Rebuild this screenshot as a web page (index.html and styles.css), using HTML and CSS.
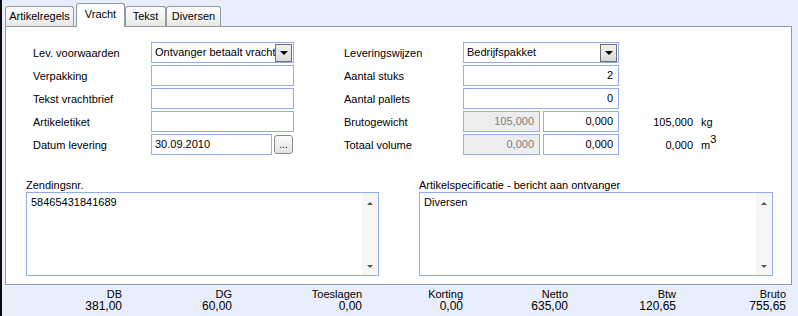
FILE: index.html
```html
<!DOCTYPE html>
<html>
<head>
<meta charset="utf-8">
<link rel="stylesheet" href="styles.css">
</head>
<body>
<div class="window">
  <div class="tabs">
    <div class="tab t1">Artikelregels</div>
    <div class="tab active">Vracht</div>
    <div class="tab t3">Tekst</div>
    <div class="tab t4">Diversen</div>
  </div>
  <div class="panel">
    <div class="form">
      <div class="col col-left">
        <div class="row"><span class="lbl">Lev. voorwaarden</span><div class="input combo w-left"><span class="val">Ontvanger betaalt vracht</span><span class="ddbtn"><i class="tri"></i></span></div></div>
        <div class="row"><span class="lbl">Verpakking</span><div class="input w-left"></div></div>
        <div class="row"><span class="lbl">Tekst vrachtbrief</span><div class="input w-left"></div></div>
        <div class="row"><span class="lbl">Artikeletiket</span><div class="input w-left"></div></div>
        <div class="row"><span class="lbl">Datum levering</span><div class="input w-date"><span class="val">30.09.2010</span></div><span class="dots">...</span></div>
      </div>
      <div class="col col-right">
        <div class="row"><span class="lbl lbl-r">Leveringswijzen</span><div class="input combo w-right"><span class="val">Bedrijfspakket</span><span class="ddbtn"><i class="tri"></i></span></div></div>
        <div class="row"><span class="lbl lbl-r">Aantal stuks</span><div class="input w-right num">2</div></div>
        <div class="row"><span class="lbl lbl-r">Aantal pallets</span><div class="input w-right num">0</div></div>
        <div class="row"><span class="lbl lbl-r">Brutogewicht</span><div class="input disabled w-dis num">105,000</div><div class="input w-sec num">0,000</div><span class="unitnum">105,000</span><span class="unit">kg</span></div>
        <div class="row"><span class="lbl lbl-r">Totaal volume</span><div class="input disabled w-dis num">0,000</div><div class="input w-sec num">0,000</div><span class="unitnum">0,000</span><span class="unit">m<sup>3</sup></span></div>
      </div>
    </div>
    <div class="memos">
      <div class="memo m1">
        <div class="mlabel">Zendingsnr.</div>
        <div class="mbox"><div class="mtext">58465431841689</div><div class="sb"><i class="up"></i><i class="down"></i></div></div>
      </div>
      <div class="memo m2">
        <div class="mlabel">Artikelspecificatie - bericht aan ontvanger</div>
        <div class="mbox"><div class="mtext">Diversen</div><div class="sb"><i class="up"></i><i class="down"></i></div></div>
      </div>
    </div>
  </div>
  <div class="totals">
    <div class="tot c1"><span class="tl">DB</span><span class="tv">381,00</span></div>
    <div class="tot c2"><span class="tl">DG</span><span class="tv">60,00</span></div>
    <div class="tot c3"><span class="tl">Toeslagen</span><span class="tv">0,00</span></div>
    <div class="tot c4"><span class="tl">Korting</span><span class="tv">0,00</span></div>
    <div class="tot c5"><span class="tl">Netto</span><span class="tv">635,00</span></div>
    <div class="tot c6"><span class="tl">Btw</span><span class="tv">120,65</span></div>
    <div class="tot c7"><span class="tl">Bruto</span><span class="tv">755,65</span></div>
  </div>
</div>
</body>
</html>
```
FILE: styles.css
```css
* { box-sizing: border-box; }
html, body { margin: 0; padding: 0; }
body {
  font-family: "Liberation Sans", Arial, sans-serif;
  font-size: 11px;
  color: #000;
  background: #e8eefc;
}
.window {
  width: 798px;
  height: 316px;
  border-left: 2px solid #0b0b10;
  background: #e8eefc;
  display: flex;
  flex-direction: column;
}
.tabs {
  display: flex;
  align-items: flex-end;
  height: 23px;
  margin-top: 3px;
  padding-left: 3px;
}
.tab {
  height: 20px;
  border: 1px solid #919b9c;
  border-bottom: none;
  border-radius: 3px 3px 0 0;
  background: linear-gradient(#fdfdfd, #f2f2f0 60%, #e6e6e2);
  text-align: center;
  line-height: 19px;
}
.t1 { width: 69px; margin-right: 2px; }
.active {
  width: 49px;
  height: 24px;
  margin-bottom: -1px;
  background: #fff;
  line-height: 20px;
  position: relative;
  z-index: 1;
  padding-bottom: 4px;
}
.t3 { width: 41px; }
.t4 { width: 55px; }
.panel {
  margin-left: 3px;
  width: 787px;
  height: 259px;
  border: 1px solid #919b9c;
  background: #fff;
}
.form {
  display: flex;
  padding: 15px 0 0 27px;
}
.col { display: flex; flex-direction: column; gap: 2px; }
.col-left { width: 261px; margin-right: 50px; }
.row { display: flex; align-items: center; height: 21px; }
.lbl { width: 118px; flex: none; }
.lbl-r { width: 119px; }
.input {
  height: 21px;
  border: 1px solid #92acec;
  background: #fff;
  padding: 0 3px;
  line-height: 19px;
  display: flex;
  align-items: center;
  flex: none;
  white-space: nowrap;
  overflow: hidden;
}
.num { justify-content: flex-end; padding-right: 5px; }
.w-left { width: 143px; }
.w-date { width: 121px; }
.w-right { width: 156px; }
.w-dis { width: 77px; margin-right: 3px; }
.w-sec { width: 76px; }
.disabled { background: #ededed; color: #7c7c7c; }
.combo { padding-right: 1px; }
.combo .val { flex: 1; overflow: hidden; }
.ddbtn {
  width: 17px;
  height: 18px;
  border: 1px solid #707070;
  background: linear-gradient(#f2f2f2, #d9d9d9);
  display: flex;
  align-items: center;
  justify-content: center;
  flex: none;
}
.tri {
  width: 0; height: 0;
  border-left: 4px solid transparent;
  border-right: 4px solid transparent;
  border-top: 4px solid #000;
  margin-top: 1px;
}
.dots {
  width: 19px;
  height: 19px;
  margin-left: 2px;
  border: 1px solid #8a8a8a;
  border-radius: 3px;
  background: linear-gradient(#fcfcfc, #e3e3e3);
  text-align: center;
  line-height: 17px;
  font-size: 10px;
}
.unitnum { width: 74px; text-align: right; }
.unit { margin-left: 8px; }
.unit sup { font-size: 11px; line-height: 0; position: relative; top: -1px; vertical-align: super; }
.memos {
  display: flex;
  gap: 40px;
  padding-left: 20px;
  margin-top: 23px;
}
.m1 { width: 353px; }
.m2 { width: 354px; }
.mlabel { line-height: 14px; height: 14px; }
.mbox {
  height: 84px;
  border: 1px solid #92acec;
  display: flex;
}
.mtext { flex: 1; padding: 2px 4px; line-height: 14px; }
.sb {
  width: 16px;
  background: #f6f6f6;
  display: flex;
  flex-direction: column;
  justify-content: space-between;
  align-items: center;
  padding: 9px 0 7px;
}
.up, .down {
  width: 0; height: 0;
  border-left: 3px solid transparent;
  border-right: 3px solid transparent;
}
.up { border-bottom: 3px solid #555; }
.down { border-top: 3px solid #555; }
.totals {
  display: flex;
  padding-top: 4px;
}
.tot {
  display: flex;
  flex-direction: column;
  align-items: flex-end;
}
.tl { line-height: 11px; font-size: 11px; }
.tv { line-height: 12px; font-size: 12px; }
.c1 { width: 120px; }
.c2 { width: 110px; }
.c3 { width: 130px; }
.c4 { width: 101px; }
.c5 { width: 105px; }
.c6 { width: 108px; }
.c7 { width: 110px; }
```
